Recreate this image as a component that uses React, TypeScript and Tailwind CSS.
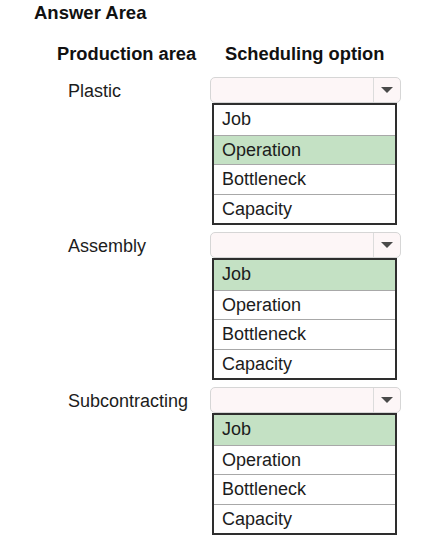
const options = ['Job', 'Operation', 'Bottleneck', 'Capacity'];

const sections = [
  { label: 'Plastic', selected: 'Operation' },
  { label: 'Assembly', selected: 'Job' },
  { label: 'Subcontracting', selected: 'Job' },
];

function Dropdown({ selected }: { selected: string }) {
  return (
    <div className="w-[191px]">
      <div className="flex h-[26px] rounded-[5px] border border-[#d6d6d6] bg-[#fdf6f7]">
        <div className="flex-1" />
        <div className="flex w-[27px] items-center justify-center border-l border-[#dcdcdc]">
          <svg width="12" height="6" viewBox="0 0 12 6">
            <path d="M0 0 L12 0 L6 6 Z" fill="#4a4a4a" />
          </svg>
        </div>
      </div>
      <div className="ml-[2px] w-[185px] border-2 border-[#2e2e2e] bg-white">
        {options.map((opt, i) => (
          <div
            key={opt}
            className={
              'h-[29.5px] pl-[8px] text-[18px] leading-[29px] text-[#1c1c1c] ' +
              (i > 0 ? 'border-t border-[#a8a8a8] ' : '') +
              (opt === selected ? 'bg-[#c4e1c4]' : '')
            }
          >
            {opt}
          </div>
        ))}
      </div>
    </div>
  );
}

export default function App() {
  return (
    <div className="h-[550px] w-[430px] bg-white pt-[1px] text-[#111]" style={{ fontFamily: '"Liberation Sans", Arial, sans-serif' }}>
      <div className="pl-[34px] text-[18.5px] font-bold leading-[24px]">Answer Area</div>
      <div className="mt-[17px] flex text-[18.3px] font-bold leading-[24px]">
        <div className="w-[225px] pl-[57px]">Production area</div>
        <div>Scheduling option</div>
      </div>
      <div className="mt-[11px] flex flex-col gap-[7px]">
        {sections.map((s) => (
          <div key={s.label} className="flex">
            <div className="w-[210px] pl-[68px] pt-[1px] text-[18px] leading-[26px] text-[#1c1c1c]">{s.label}</div>
            <Dropdown selected={s.selected} />
          </div>
        ))}
      </div>
    </div>
  );
}
